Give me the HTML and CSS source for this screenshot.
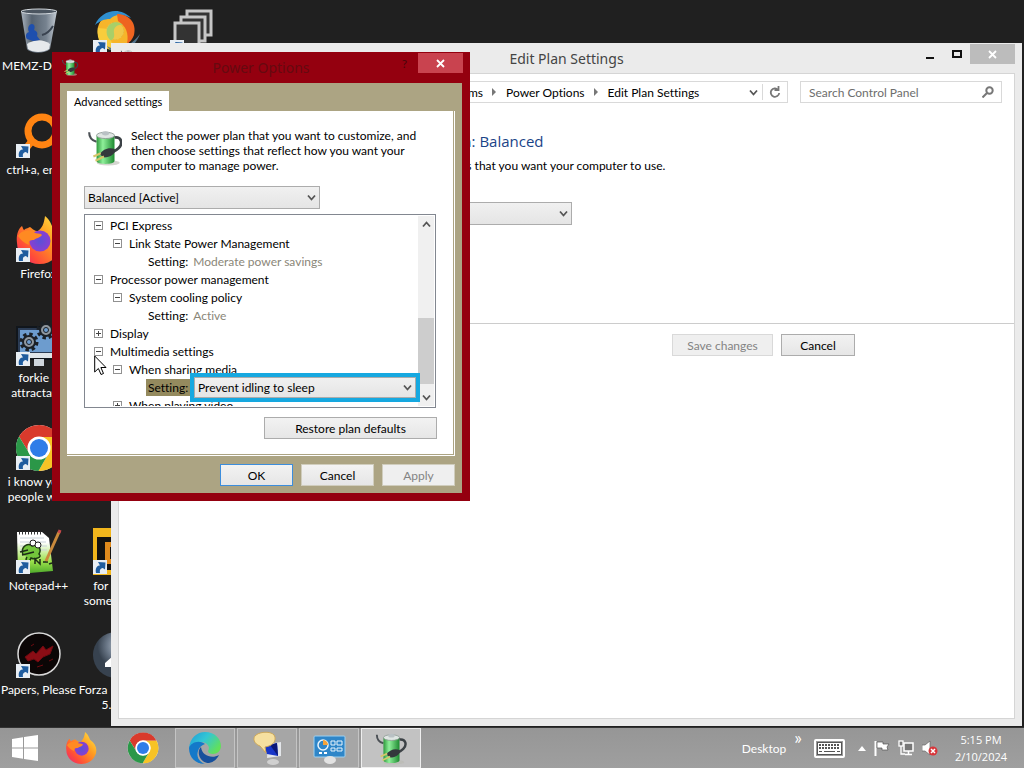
FILE: index.html
```html
<!DOCTYPE html>
<html lang="en">
<head>
  <meta charset="UTF-8" />
  <title>Power Options</title>
  <link rel="stylesheet" href="styles.css">
</head>
<body>

  <!-- shared icons -->
  <svg class="defs" width="0" height="0" aria-hidden="true">
    <defs>
      <linearGradient id="gGreen" x1="0" x2="1"><stop offset="0" stop-color="#2e9a3c"/><stop offset=".35" stop-color="#8ff09a"/><stop offset="1" stop-color="#1d8a30"/></linearGradient>
      <linearGradient id="gFox" x1="1" y1="0" x2="0" y2="1"><stop offset="0" stop-color="#fff04a"/><stop offset=".4" stop-color="#ff9a20"/><stop offset=".75" stop-color="#ff4a3a"/><stop offset="1" stop-color="#e0208a"/></linearGradient>
      <radialGradient id="gFoxIn"><stop offset="0" stop-color="#5a50d8"/><stop offset="1" stop-color="#8a3fd0"/></radialGradient>
      <linearGradient id="gEdge" x1="0" y1="0" x2="1" y2=".6"><stop offset="0" stop-color="#1d9bd8"/><stop offset=".5" stop-color="#34c6d4"/><stop offset="1" stop-color="#62e05a"/></linearGradient>
      <linearGradient id="gNote" x1="0" y1="0" x2="0" y2="1"><stop offset=".25" stop-color="#fff"/><stop offset=".7" stop-color="#9be04a"/><stop offset="1" stop-color="#4aa82a"/></linearGradient>
      <linearGradient id="gBin" x1="0" x2="1"><stop offset="0" stop-color="#aab4bf"/><stop offset=".3" stop-color="#56626f"/><stop offset=".7" stop-color="#76828f"/><stop offset="1" stop-color="#c4ccd4"/></linearGradient>
      <radialGradient id="gBall" cx=".6" cy=".3"><stop offset="0" stop-color="#c3ccd6"/><stop offset=".6" stop-color="#6b7888"/><stop offset="1" stop-color="#37424f"/></radialGradient>
    </defs>
    <symbol id="arrow" viewBox="0 0 14 14">
      <rect width="14" height="14" fill="#e8eef4"/>
      <path d="M3 13C2 8 4 5.500 7 5.500L5 2l7.500.5L12 9.500 9.800 8C7.500 8.500 6.500 9.500 7 13z" fill="#1f5c9e"/>
    </symbol>
    <symbol id="battery" viewBox="0 0 32 36">
      <ellipse cx="19" cy="33" rx="11" ry="2.500" fill="#b9b9b0" opacity=".6"/>
      <path d="M1 4c0 6 3 8 7 9" fill="none" stroke="#4b5055" stroke-width="2"/>
      <path d="M8 7v24c0 4 17 4 17 0V7z" fill="url(#gGreen)"/>
      <ellipse cx="16.500" cy="7" rx="8.500" ry="3" fill="#dfe6e3" stroke="#8b9792" stroke-width=".8"/>
      <ellipse cx="16.500" cy="5" rx="3.500" ry="2" fill="#b9c1c4"/>
      <path d="M25 9c7-1 8 6 4 10-2 2-4 3-6 4" fill="none" stroke="#3c4246" stroke-width="2.600"/>
      <path d="M11 25c3-5 9-7 14-5 2 4-4 8-10 8z" fill="#33383c"/>
      <path d="M12 24l-7 3M15 27l-8 4" stroke="#d5c66a" stroke-width="2"/>
    </symbol>
    <symbol id="chrome" viewBox="0 0 48 48">
      <circle cx="24" cy="24" r="23" fill="#fff"/>
      <path d="M24 13h20.300A23 23 0 0 0 4 12.600L14.500 29.500A11 11 0 0 1 24 13z" fill="#d93a2c"/>
      <path d="M33.500 29.500L23.500 47A23 23 0 0 0 44.300 13H24a11 11 0 0 1 9.500 16.500z" fill="#f7c325"/>
      <path d="M14.500 29.500L4 12.600A23 23 0 0 0 23.500 47l10-17.500a11 11 0 0 1-19 0z" fill="#2b9748"/>
      <circle cx="24" cy="24" r="11.500" fill="#fff"/>
      <circle cx="24" cy="24" r="9" fill="#2f7de8"/>
    </symbol>
    <symbol id="firefox" viewBox="0 0 48 48">
      <path d="M30 0c6 5 6 9 8 12 6 4 9 10 9 15a22.500 21 0 0 1-45 0C1 20 3 13 7 10c1 2 1 3 2 4 2-2 5-2 6-3 3 2 4 4 8 4 4-3 6-7 7-15z" fill="url(#gFox)"/>
      <circle cx="25" cy="25" r="10.500" fill="url(#gFoxIn)"/>
      <path d="M3 20C6 14 16 13 20 17c3 1 6 0 7 2-2 3-6 3-8 5-4 0-6 1-5 5-5-2-9-6-11-9z" fill="#ff8a22"/>
    </symbol>
    <symbol id="chev" viewBox="0 0 9 7"><path d="M1 1.500l3.500 4 3.500-4" fill="none" stroke="#555" stroke-width="1.800"/></symbol>
  </svg>

  <main class="desktop">

    <div class="icons">
      <div class="icon">
        <svg width="48" height="48" viewBox="0 0 48 48"><path d="M6 3l6 38c4 5 18 5 23 0l7-38z" fill="url(#gBin)"/><ellipse cx="24" cy="3.500" rx="18" ry="2.500" fill="#4b5560" stroke="#d5dbe0" stroke-width="1"/><path d="M12 36c8-5 16-5 23 0l-1 5c-5 4-17 4-21 0z" fill="#e6e9ec"/><path d="M12 31c-2-3-1-6 2-7-2-4 0-8 3-8s3 4 2 6c3 1 4 3 3 6l3 4-7 1z" fill="#1e4fae"/><path d="M27 27c4-1 8-4 11-9" fill="none" stroke="#3a4350" stroke-width="2"/></svg>
        <span>MEMZ-Drago</span>
      </div>
      <div class="icon">
        <svg width="48" height="48" viewBox="0 0 48 48"><circle cx="23" cy="23" r="13" fill="none" stroke="#f6b52a" stroke-width="9"/><path d="M3 17C9 2 28-2 39 10c-9-4-16-4-21 1-6 0-10 2-15 6z" fill="#2f8fcf"/><path d="M25 6c12 0 20 9 17 21-2 5-4 7-7 9 2-11-1-18-9-23z" fill="#ee6420"/><path d="M6 20c-2 12 4 20 13 22 5 0 9-1 12-3-9 0-16-7-14-18z" fill="#f8cd3c"/><path d="M15 38c9 6 22 2 33-12-3 8-10 17-20 19-5 0-10-2-13-7z" fill="#52738a"/><circle cx="23" cy="23" r="9" fill="#f0c84a"/><path d="M15 21c2-7 11-9 16-4-5-1-10 2-9 8 1 5-2 8-4 7-3-3-4-7-3-11z" fill="#a8cf68"/></svg>
        <svg class="badge" width="14" height="14"><use href="#arrow"/></svg>
      </div>
      <div class="icon">
        <svg width="48" height="48" viewBox="0 0 48 48" fill="#333" stroke="#c6c6c6" stroke-width="3"><path d="M18 3h24v24H18z"/><path d="M12 9h24v24H12z"/><path d="M6 15h24v30H6z"/></svg>
        <svg class="badge" width="14" height="14"><use href="#arrow"/></svg>
      </div>
      <div class="icon row2">
        <svg width="48" height="48" viewBox="0 0 48 48"><circle cx="27" cy="19" r="14" fill="none" stroke="#ff8412" stroke-width="7"/><path d="M17 29L8 40" stroke="#ff8412" stroke-width="7"/></svg>
        <svg class="badge" width="14" height="14"><use href="#arrow"/></svg>
        <span>ctrl+a, enter</span>
      </div>
      <div class="icon row3">
        <svg width="48" height="48"><use href="#firefox"/></svg>
        <svg class="badge" width="14" height="14"><use href="#arrow"/></svg>
        <span>Firefox</span>
      </div>
      <div class="icon row4">
        <svg width="48" height="48" viewBox="0 0 48 48"><path d="M2 7h44v32H2z" fill="#2b3c55" stroke="#11161c" stroke-width="2"/><path d="M5 10h38v22H5z" fill="#6d9cce"/><path d="M3 33h42v5H3z" fill="#dfe5ea"/><path d="M19 39h10v7H19z" fill="#cfd6dc"/><g fill="none" stroke="#1b2026"><circle cx="14" cy="22" r="7" stroke-width="5" stroke-dasharray="3 2.500"/><circle cx="31" cy="10" r="7" stroke-width="5" stroke-dasharray="3 2.500"/></g><g fill="#8f979e" stroke="#1b2026" stroke-width="2"><circle cx="14" cy="22" r="6"/><circle cx="31" cy="10" r="6"/></g><g fill="#6d9cce" stroke="#1b2026"><circle cx="14" cy="22" r="2.500"/><circle cx="31" cy="10" r="2.500"/></g></svg>
        <svg class="badge" width="14" height="14"><use href="#arrow"/></svg>
        <span>forkie e<br>attractatio</span>
      </div>
      <div class="icon row5">
        <svg width="48" height="48"><use href="#chrome"/></svg>
        <svg class="badge" width="14" height="14"><use href="#arrow"/></svg>
        <span>i know your<br>people who</span>
      </div>
      <div class="icon row6">
        <svg width="48" height="48" viewBox="0 0 48 48"><path d="M2 4h25l7 6 4 33-35 3z" fill="url(#gNote)"/><path d="M4 5h22" stroke="#333" stroke-width="3" stroke-dasharray="1 2"/><path d="M5 10h24M5 14h26M5 18h27M5 22h27" stroke="#c9d2d8" stroke-width="1"/><path d="M8 27c-3-10 6-12 9-9 6-3 10 3 7 8 4 3-4 6-8 4-2 6-7 3-4-1" fill="#74c63c" stroke="#1c3a12" stroke-width="1.500"/><g fill="#fff" stroke="#222"><circle cx="18" cy="15" r="3"/><circle cx="23" cy="17" r="3"/></g><path d="M5 24l8-2M7 27l12-3M20 36v-5l5 5v-5M28 34h5M34 36l3-1" stroke="#1c2a18" stroke-width="1.500" fill="none"/><path d="M31 33L44 4" stroke="#c98a3c" stroke-width="3"/><path d="M44 5l1-3" stroke="#c9494a" stroke-width="3"/></svg>
        <svg class="badge" width="14" height="14"><use href="#arrow"/></svg>
        <span>Notepad++</span>
      </div>
      <div class="icon row6 col2">
        <svg width="48" height="48" viewBox="0 0 48 48"><path d="M1 0h46v47H1z" fill="#f2b61c"/><path d="M5 9h38v33H5z" fill="#141210"/><path d="M13 14h22v22H13z" fill="#e08a1c"/><path d="M18 19h12v12H18z" fill="#141210"/></svg>
        <svg class="badge" width="14" height="14"><use href="#arrow"/></svg>
        <span>for mom<br>some things</span>
      </div>
      <div class="icon row7">
        <svg width="48" height="48" viewBox="0 0 48 48"><circle cx="24" cy="22" r="21" fill="#0b0606" stroke="#d9d9d9" stroke-width="1.500"/><path d="M10 25l8-6 3 3 7-8 3 4 7-4-3 8-7 3-5 5-4-3-6 2zM16 14l3-2M34 29l4-2M22 35l6-2" fill="#8a0d15" stroke="#6e0a10" stroke-width="1"/></svg>
        <svg class="badge" width="14" height="14"><use href="#arrow"/></svg>
        <span>Papers, Please</span>
      </div>
      <div class="icon row7 col2">
        <svg width="48" height="48" viewBox="0 0 48 48"><circle cx="24" cy="23" r="23" fill="url(#gBall)"/><path d="M13 31l8-7v5h8v6H13z" fill="#fff"/></svg>
        <span>Forza Horizon<br>5.exe</span>
      </div>
    </div>

    <section class="window plan-window">
      <header class="plan-title">
        <svg class="title-icon" width="16" height="16"><use href="#battery"/></svg>
        <h1>Edit Plan Settings</h1>
        <div class="caption">
          <button aria-label="Minimize"><svg width="12" height="12"><path d="M2 9h8v2H2z" fill="#111"/></svg></button>
          <button aria-label="Maximize"><svg width="12" height="12"><path d="M2 3h8v6H2z" fill="none" stroke="#111" stroke-width="2"/></svg></button>
          <button class="close" aria-label="Close"><svg width="9" height="9"><path d="M1 1l7 7M8 1L1 8" stroke="#fff" stroke-width="1.800"/></svg></button>
        </div>
      </header>
      <div class="plan-body">
        <nav class="nav">
          <div class="address">
            <a href="#">All Control Panel Items</a>
            <svg width="5" height="8"><path d="M0 0l4 4-4 4z" fill="#777"/></svg>
            <a href="#">Power Options</a>
            <svg width="5" height="8"><path d="M0 0l4 4-4 4z" fill="#777"/></svg>
            <a href="#">Edit Plan Settings</a>
            <button class="history" aria-label="Previous locations"><svg width="9" height="7"><use href="#chev"/></svg></button>
            <button class="refresh" aria-label="Refresh"><svg width="12" height="12" viewBox="0 0 12 12" fill="none" stroke="#777" stroke-width="1.800"><path d="M9 3.600A4.200 4.200 0 1 0 10.200 7"/><path d="M5.500 4h4V0"/></svg></button>
          </div>
          <div class="search">
            <input type="text" placeholder="Search Control Panel" aria-label="Search Control Panel">
            <svg width="12" height="12" viewBox="0 0 12 12" fill="none" stroke="#777" stroke-width="2"><circle cx="7.500" cy="4.500" r="3.200"/><path d="M5 7l-4.500 4.500"/></svg>
          </div>
        </nav>
        <div class="plan-text">
          <h2>Change settings for the plan: Balanced</h2>
          <p>Choose the sleep and display settings that you want your computer to use.</p>
          <div class="drop">
            <select aria-label="Turn off the display"><option></option></select>
            <svg width="9" height="7"><use href="#chev"/></svg>
          </div>
        </div>
        <div class="plan-actions">
          <button class="btn" disabled>Save changes</button>
          <button class="btn">Cancel</button>
        </div>
      </div>
    </section>

    <section class="window power-dialog">
      <header class="power-title">
        <svg class="title-icon" width="18" height="18"><use href="#battery"/></svg>
        <h1>Power Options</h1>
        <div class="caption">
          <button class="help" aria-label="Help">?</button>
          <button class="close" aria-label="Close"><svg width="9" height="9"><path d="M1 1l7 7M8 1L1 8" stroke="#fff" stroke-width="1.800"/></svg></button>
        </div>
      </header>
      <div class="power-body">
        <button class="tab">Advanced settings</button>
        <div class="panel">
          <div class="intro">
            <svg width="34" height="38"><use href="#battery"/></svg>
            <p>Select the power plan that you want to customize, and then choose settings that reflect how you want your computer to manage power.</p>
          </div>
          <div class="drop">
            <select aria-label="Power plan"><option>Balanced [Active]</option></select>
            <svg width="9" height="7"><use href="#chev"/></svg>
          </div>
          <div class="tree">
            <ul>
              <li><button class="toggle" aria-label="Collapse"></button>PCI Express</li>
              <li class="level2"><button class="toggle" aria-label="Collapse"></button>Link State Power Management</li>
              <li class="level3"><b>Setting:</b><span class="value">Moderate power savings</span></li>
              <li><button class="toggle" aria-label="Collapse"></button>Processor power management</li>
              <li class="level2"><button class="toggle" aria-label="Collapse"></button>System cooling policy</li>
              <li class="level3"><b>Setting:</b><span class="value">Active</span></li>
              <li><button class="toggle plus" aria-label="Expand"></button>Display</li>
              <li><button class="toggle" aria-label="Collapse"></button>Multimedia settings</li>
              <li class="level2"><button class="toggle" aria-label="Collapse"></button>When sharing media</li>
              <li class="level3 selected"><label for="sharing">Setting:</label>
                <div class="drop editing">
                  <select id="sharing"><option>Prevent idling to sleep</option></select>
                  <svg width="9" height="7"><use href="#chev"/></svg>
                </div>
              </li>
              <li class="level2"><button class="toggle plus" aria-label="Expand"></button>When playing video</li>
            </ul>
            <div class="scrollbar">
              <svg class="up" width="9" height="7"><use href="#chev"/></svg>
              <div class="thumb"></div>
              <svg width="9" height="7"><use href="#chev"/></svg>
            </div>
          </div>
          <button class="btn restore">Restore plan defaults</button>
        </div>
        <div class="dialog-actions">
          <button class="btn default">OK</button>
          <button class="btn">Cancel</button>
          <button class="btn" disabled>Apply</button>
        </div>
      </div>
    </section>

    <svg class="cursor" width="13" height="21" viewBox="0 0 13 21"><path d="M.7 1v16l3.700-3.500 2.600 6 2.500-1-2.600-6H12z" fill="#fff" stroke="#000"/></svg>
  </main>

  <footer class="taskbar">
    <button class="task start" aria-label="Start"><svg width="28" height="28" viewBox="0 0 28 28" fill="#fff"><path d="M1 5l11-1.800V13.500H1zM13 3l14-2v12.500H13zM1 14.500h11v10.300L1 23zM13 14.500h14V27l-14-2z"/></svg></button>
    <button class="task" aria-label="Firefox"><svg width="32" height="32"><use href="#firefox"/></svg></button>
    <button class="task" aria-label="Chrome"><svg width="32" height="32"><use href="#chrome"/></svg></button>
    <button class="task open" aria-label="Edge"><svg width="34" height="34" viewBox="0 0 34 34"><path d="M1 17C2 7 9 1 17 1c10 0 16 7 16 14 0 5-4 8-8 8-3 0-5-1-5-3 3-5-2-9-7-9-6 0-10 3-12 6z" fill="url(#gEdge)"/><path d="M1 17c0 10 7 16 16 16-6-2-9-8-7-13 1-4 4-6 7-7-6-5-15-1-16 4z" fill="#1479c9"/><path d="M13 16c-5 5-1 16 8 16 5-1 8-4 10-8-7 4-17 1-18-8z" fill="#17509c"/></svg></button>
    <button class="task open" aria-label="Run"><svg width="32" height="34" viewBox="0 0 32 34"><ellipse cx="22" cy="31" rx="6" ry="3" fill="#d0d0d0"/><path d="M17 13l13-2v14l-14 2z" fill="#e3e6ea"/><path d="M13 15l13-3 1 13-11-2z" fill="#1836c8"/><path d="M19 14l7-2 1 13z" fill="#0b1778"/><path d="M14 16l1 6-6-7C3 13 1 7 5 4c5-4 18-4 19 2 1 6-4 9-10 10z" fill="#f6e0a0" stroke="#cda85a"/></svg></button>
    <button class="task open" aria-label="Control Panel"><svg width="34" height="32" viewBox="0 0 34 32"><rect x="2" y="4" width="31" height="21" rx="1" fill="#2f86c8" stroke="#9fd0ef"/><circle cx="11" cy="13" r="5" fill="#2f86c8" stroke="#e8f4fc" stroke-width="1.500"/><path d="M11 13V8a5 5 0 0 1 5 5z" fill="#f5a33a"/><path d="M19 9h4v4h-4zM25 9h5v4h-5zM19 16h4v3h-4zM25 16h5v3h-5z" fill="none" stroke="#e8f4fc"/><path d="M7 21h3M12 21h3" stroke="#fff" stroke-width="2"/><ellipse cx="18" cy="28" rx="6" ry="4" fill="#e2e2e2"/></svg></button>
    <button class="task open active" aria-label="Power Options"><svg width="32" height="34"><use href="#battery"/></svg></button>

    <div class="tray">
      <span class="desk">Desktop</span>
      <span class="more">»</span>
      <svg class="keyboard" width="31" height="19" viewBox="0 0 31 19"><rect x="1" y="1" width="29" height="17" rx="1" fill="#9c9c9c" stroke="#fff" stroke-width="2"/><rect x="3.500" y="3.500" width="24" height="12" fill="#fff" stroke="#555"/><path d="M5 6h21M5 9h21" stroke="#555" stroke-width="2" stroke-dasharray="2 1"/><path d="M5 12.500h3M10 12.500h11M23 12.500h3" stroke="#555" stroke-width="1"/></svg>
      <svg width="8" height="5"><path d="M0 5l4-5 4 5z" fill="#fff"/></svg>
      <svg width="16" height="16" viewBox="0 0 16 16"><path d="M1.500 1v15" stroke="#fff" stroke-width="2"/><path d="M3 2h6v2h6l-2 3 1 3H8V8H3z" fill="#fff" stroke="#555" stroke-width=".7"/></svg>
      <svg width="16" height="16" viewBox="0 0 16 16"><path d="M6 3h9v8H6zM10.500 11v3M7 14.500h7" fill="#777" stroke="#fff" stroke-width="1.500"/><rect x="1" y="1" width="4" height="5" fill="#777" stroke="#fff" stroke-width="1.300"/><path d="M3 6v8h4" fill="none" stroke="#fff" stroke-width="1.300"/></svg>
      <svg width="16" height="16" viewBox="0 0 16 16"><path d="M0 5h3l5-4v14l-5-4H0z" fill="#fff" stroke="#666" stroke-width=".7"/><circle cx="11" cy="11" r="4.500" fill="#d8363a"/><path d="M9 9l4 4M13 9l-4 4" stroke="#fff" stroke-width="1.500"/></svg>
      <div class="clock">5:15 PM<br>2/10/2024</div>
    </div>
  </footer>

</body>
</html>
```
FILE: styles.css
```css
* {
  box-sizing: border-box;
}

body {
  margin: 0;
  height: 100vh;
  display: flex;
  flex-direction: column;
  overflow: hidden;
  background-color: #202020;
  color: #000;
  font-family: Lato, "Open Sans", sans-serif;
  font-size: 12px;
  font-variant-ligatures: none;
  line-height: 15px;
}

h1, h2, p, ul {
  margin: 0;
  padding: 0;
  font-weight: normal;
}

button, input, select {
  font: inherit;
  font-variant-ligatures: none;
  color: inherit;
  margin: 0;
}

button {
  padding: 0;
  border: none;
  background: none;
}

svg {
  display: block;
  flex: none;
}

.defs {
  position: absolute;
}

/* desktop */

.desktop {
  position: relative;
  flex: 1;
  min-height: 0;
}

.icons {
  display: grid;
  grid-template-columns: repeat(3, 77px);
  grid-auto-rows: 104px;
  padding-top: 8px;
}

.icon {
  position: relative;
  display: flex;
  flex-direction: column;
  align-items: center;
  gap: 2px;
  color: #fff;
  text-align: center;
  white-space: nowrap;
}

.badge {
  position: absolute;
  left: 16px;
  top: 32px;
}

.row2 { grid-row: 2; }
.row3 { grid-row: 3; }
.row4 { grid-row: 4; }
.row5 { grid-row: 5; }
.row6 { grid-row: 6; }
.row7 { grid-row: 7; }
.col2 { grid-column: 2; }

/* windows */

.window {
  position: absolute;
}

.window h1 {
  font-family: "Noto Sans", sans-serif;
  font-size: 14px;
  line-height: 32px;
  text-align: center;
}

.title-icon {
  position: absolute;
  left: 9px;
  top: 6px;
}

.caption {
  position: absolute;
  top: 1px;
  right: 7px;
  display: flex;
}

.caption button {
  display: flex;
  width: 27px;
  height: 20px;
  align-items: center;
  justify-content: center;
}

.caption .close {
  width: 45px;
}

.btn {
  height: 22px;
  border: 1px solid #acacac;
  background: linear-gradient(#f2f2f2, #e6e6e6);
}

.btn:disabled {
  border-color: #d9d9d9;
  background: #efefef;
  color: #838383;
}

.drop {
  position: relative;
  width: 236px;
}

.drop select {
  display: block;
  width: 100%;
  height: 23px;
  padding: 0 3px;
  border: 1px solid #acacac;
  border-radius: 0;
  background: linear-gradient(#f0f0f0, #e5e5e5);
  appearance: none;
}

.drop svg {
  position: absolute;
  right: 4px;
  top: 8px;
}

/* edit plan window */

.plan-window {
  left: 111px;
  top: 43px;
  right: 2px;
  bottom: 1px;
  display: flex;
  flex-direction: column;
  padding: 0 7px 7px;
  background-color: #ebebeb;
}

.plan-window h1 {
  height: 30px;
  color: #444;
}

.plan-window .close {
  background-color: #bcbcbc;
}

.plan-body {
  flex: 1;
  border: 1px solid #d5d5d5;
  background-color: #fff;
}

.nav {
  display: flex;
  gap: 12px;
  padding: 7px 12px 0;
}

.address {
  flex: 1;
  display: flex;
  align-items: center;
  gap: 4px;
  height: 22px;
  padding-left: 231px;
  border: 1px solid #d9d9d9;
}

.address > svg {
  margin: 0 5px;
}

.address a {
  color: #000;
  text-decoration: none;
}

.history {
  margin-left: auto;
}

.refresh {
  height: 16px;
  padding: 0 6px;
  border-left: 1px solid #d9d9d9;
}

.search {
  position: relative;
  width: 202px;
}

.search input {
  width: 100%;
  height: 22px;
  padding: 0 8px;
  border: 1px solid #d9d9d9;
  background-color: #fff;
}

.search input::placeholder {
  color: #6d6d6d;
  opacity: 1;
}

.search svg {
  position: absolute;
  right: 8px;
  top: 5px;
}

.plan-text {
  height: 221px;
  padding: 27px 0 0 156px;
  border-bottom: 1px solid #ccc;
}

.plan-text h2 {
  margin-bottom: 6px;
  color: #1a4488;
  font-family: "Open Sans", sans-serif;
  font-size: 15px;
  line-height: 22px;
}

.plan-text .drop {
  width: 297px;
  margin-top: 29px;
}

.plan-actions {
  display: flex;
  justify-content: flex-end;
  gap: 8px;
  padding: 10px 159px 0 0;
}

.plan-actions .btn {
  width: 74px;
}

.plan-actions .btn:disabled {
  width: 101px;
}

/* power options dialog */

.power-dialog {
  left: 52px;
  top: 52px;
  width: 418px;
  padding: 0 8px 8px;
  background-color: #94000f;
}

.power-title h1 {
  height: 31px;
  color: #650a10;
}

.power-dialog .close {
  background-color: #c9434f;
}

.help {
  color: #4a060b;
}

.power-body {
  padding: 8px 7px 7px;
  background-color: #aca483;
}

.tab {
  display: block;
  height: 20px;
  padding: 0 7px;
  background-color: #fff;
  font-size: 11px;
}

.panel {
  display: flex;
  flex-direction: column;
  height: 345px;
  padding: 17px 17px 0;
  border-right: 1px solid #fff;
  border-bottom: 1px solid #fff;
  box-shadow: inset -1px -1px #aca483;
  background-color: #fff;
}

.intro {
  display: flex;
  gap: 9px;
  height: 58px;
  padding: 0 16px 0 4px;
}

.tree {
  position: relative;
  display: flex;
  width: 352px;
  height: 194px;
  margin: 5px 0 9px;
  padding: 1px;
  overflow: hidden;
  border: 1px solid #828790;
}

.tree ul {
  flex: 1;
  height: 190px;
  overflow: hidden;
  list-style: none;
}

.tree li {
  display: flex;
  align-items: center;
  height: 18px;
  padding-left: 8px;
}

.tree .level2 {
  padding-left: 27px;
}

.tree .level3 {
  padding-left: 62px;
}

.tree b {
  font-weight: normal;
}

.value {
  margin-left: 5px;
  color: #8a8678;
}

.selected label {
  margin-left: -2px;
  padding: 1px 2px;
  background-color: #948a5e;
}

.toggle {
  width: 9px;
  height: 9px;
  margin-right: 7px;
  border: 1px solid #919191;
  background: linear-gradient(#444, #444) center / 5px 1px no-repeat;
}

.plus {
  background: linear-gradient(#444, #444) center / 5px 1px no-repeat,
    linear-gradient(#444, #444) center / 1px 5px no-repeat;
}

/* open editor sits over the row and the scroll bar */
.tree .editing {
  position: absolute;
  z-index: 1;
  left: 105px;
  top: 158px;
  width: 230px;
  border: 4px solid #16a8e0;
}

.editing select {
  height: 21px;
}

.editing svg {
  top: 7px;
}

.scrollbar {
  display: flex;
  flex-direction: column;
  align-items: center;
  justify-content: space-between;
  width: 16px;
  padding: 5px 0;
  background-color: #f0f0f0;
}

.up {
  transform: rotate(180deg);
}

.thumb {
  width: 16px;
  height: 66px;
  margin: auto 0 10px;
  background-color: #cdcdcd;
}

.restore {
  width: 173px;
  margin-left: auto;
}

.dialog-actions {
  display: flex;
  justify-content: flex-end;
  gap: 8px;
  padding-top: 8px;
}

.dialog-actions .btn {
  width: 73px;
  border-color: #d0cdbd;
}

.dialog-actions .default {
  border-color: #3c8ddc;
}

.cursor {
  position: absolute;
  left: 94px;
  top: 355px;
}

/* taskbar */

.taskbar {
  display: flex;
  flex: none;
  gap: 2px;
  height: 41px;
  border-top: 1px solid #333;
  background: linear-gradient(#969696, #9f9f9f);
}

.task {
  display: flex;
  align-items: center;
  justify-content: center;
  width: 60px;
}

.start {
  width: 49px;
}

.open {
  border: 1px solid #c4c4c4;
  background-color: #a6a6a6;
}

.active {
  border-color: #eee;
  background-color: #c2c2c2;
}

.tray {
  display: flex;
  flex: 1;
  align-items: center;
  justify-content: flex-end;
  gap: 8px;
  padding-right: 13px;
  color: #fff;
}

.more {
  align-self: flex-start;
  font-size: 18px;
  line-height: 18px;
}

.keyboard {
  margin: 0 5px 0 4px;
}

.clock {
  width: 60px;
  margin-left: 5px;
  font-family: "Open Sans", sans-serif;
  font-size: 11px;
  line-height: 17px;
  text-align: center;
}
```
